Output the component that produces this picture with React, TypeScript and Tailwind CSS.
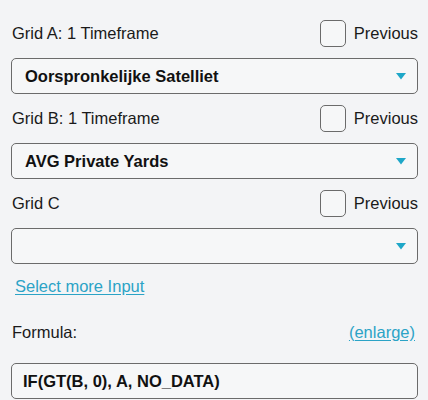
import React from "react";

const font = { fontFamily: '"Liberation Sans", Arial, sans-serif' };

function LabelRow({ label }: { label: string }) {
  return (
    <div className="flex items-center justify-between h-[27px]">
      <span className="text-[16.5px] text-[#1a1a1a] leading-none pl-px">{label}</span>
      <div className="flex items-center gap-[8px]">
        <div className="w-[26px] h-[27px] rounded-[5px] border-[1.5px] border-[#6b6b6b] bg-[#f6f7f8]" />
        <span className="text-[16.5px] text-[#1a1a1a] leading-none">Previous</span>
      </div>
    </div>
  );
}

function Select({ value }: { value: string }) {
  return (
    <div className="mt-[11px] h-[36px] rounded-[5px] border-[1.5px] border-[#6b6b6b] bg-[#f6f7f8] flex items-center justify-between pl-[13px] pr-[11px]">
      <span className="text-[16.5px] font-bold text-[#111]">{value}</span>
      <svg width="10" height="7" viewBox="0 0 10 7">
        <polygon points="0,0 10,0 5,6.5" fill="#1ea7c8" />
      </svg>
    </div>
  );
}

export default function App() {
  return (
    <div className="w-[428px] h-[400px] bg-[#f3f4f6] pl-[11px] pr-[10px] pt-[20px]" style={font}>
      <LabelRow label="Grid A: 1 Timeframe" />
      <Select value="Oorspronkelijke Satelliet" />
      <div className="mt-[11px]">
        <LabelRow label="Grid B: 1 Timeframe" />
        <Select value="AVG Private Yards" />
      </div>
      <div className="mt-[11px]">
        <LabelRow label="Grid C" />
        <Select value="" />
      </div>
      <div className="mt-[10px] h-[24px] flex items-center pl-[4px]">
        <span className="text-[16.5px] text-[#2ba3c6] underline underline-offset-2">Select more Input</span>
      </div>
      <div className="mt-[22px] h-[24px] flex items-center justify-between pl-px pr-[3px]">
        <span className="text-[16.5px] text-[#1a1a1a]">Formula:</span>
        <span className="text-[16.5px] text-[#2ba3c6] underline underline-offset-2">(enlarge)</span>
      </div>
      <div className="mt-[19px] h-[36px] rounded-[5px] border-[1.5px] border-[#6b6b6b] bg-[#f6f7f8] flex items-center pl-[11px]">
        <span className="text-[16.5px] font-bold text-[#111]">IF(GT(B, 0), A, NO_DATA)</span>
      </div>
    </div>
  );
}
